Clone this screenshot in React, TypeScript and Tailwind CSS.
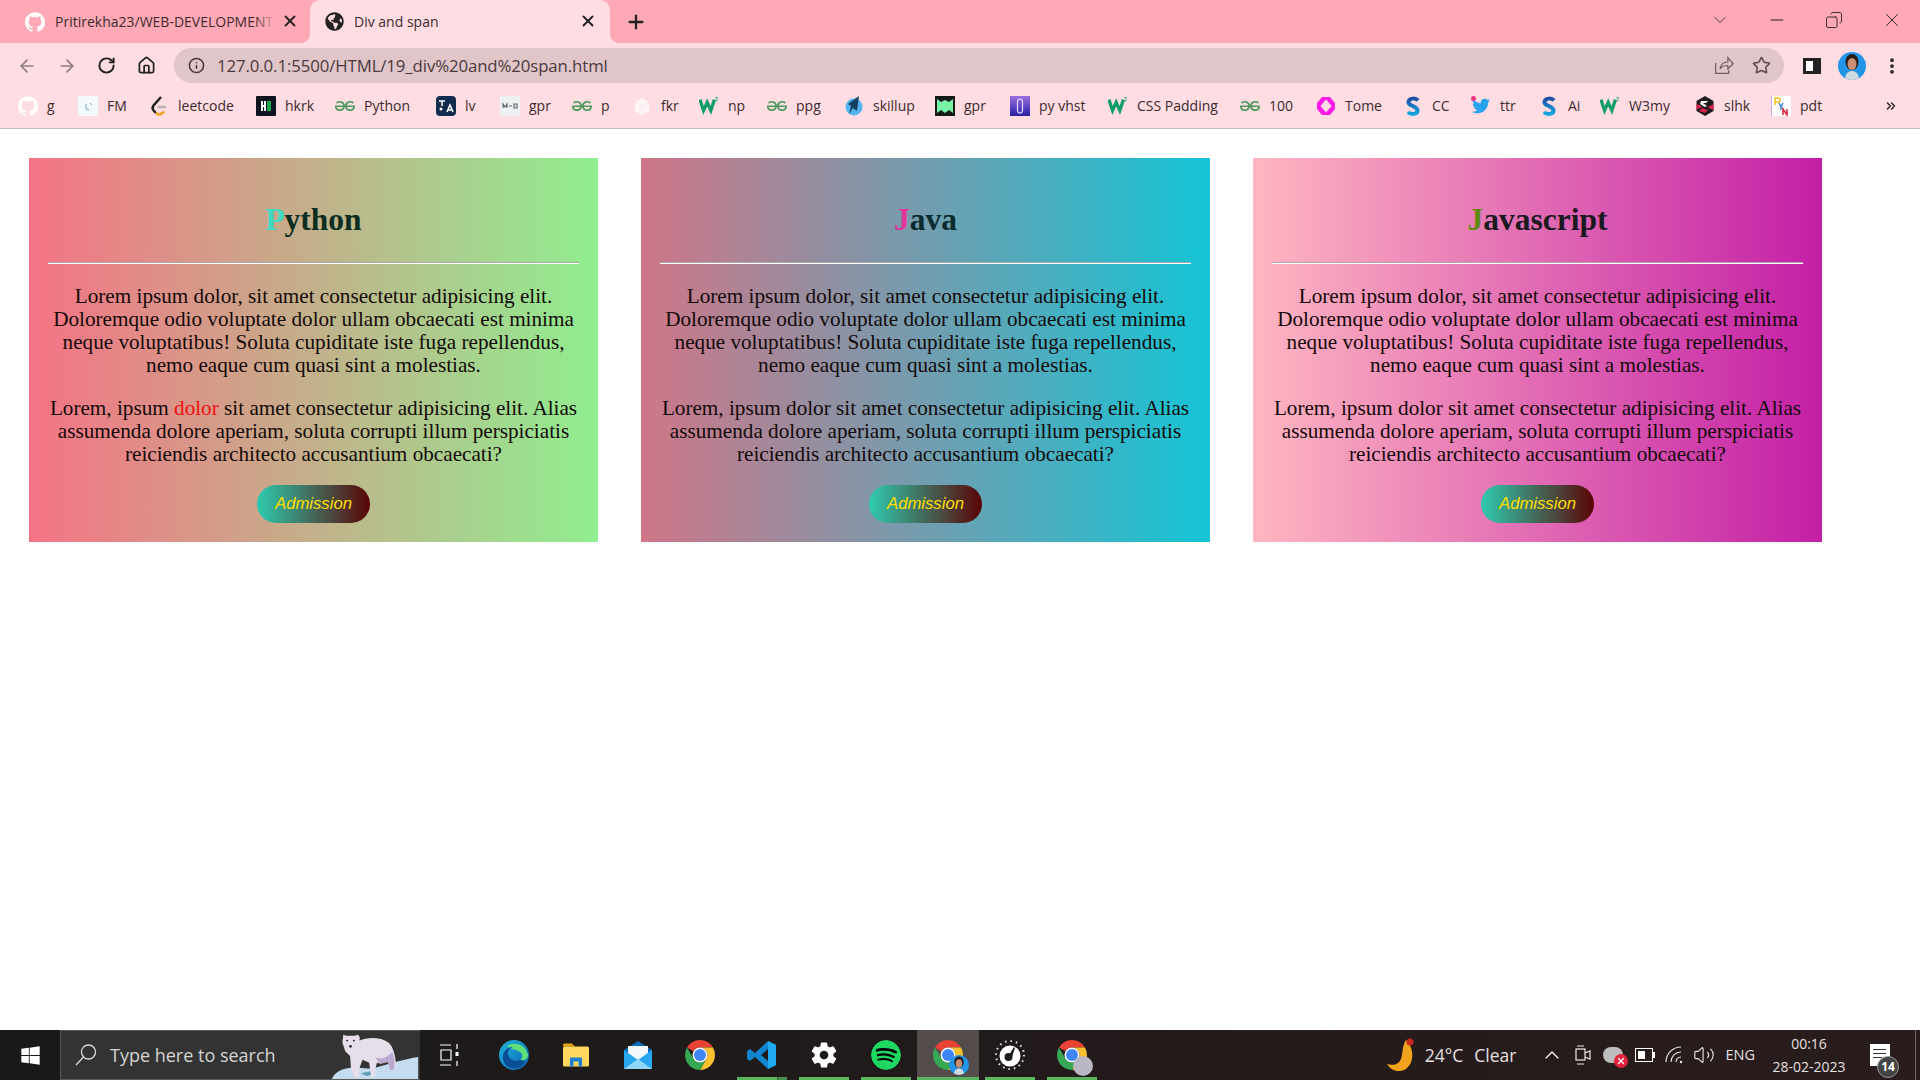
import React from 'react';
import {
  ArrowLeft,
  ArrowRight,
  ChevronDown,
  ChevronsRight,
  ChevronUp,
  Copy,
  Home,
  Info,
  Minus,
  MoreVertical,
  Plus,
  RotateCw,
  Star,
  Volume2,
  X,
} from 'lucide-react';
import { SiGeeksforgeeks, SiGithub, SiSpotify } from 'react-icons/si';
import { FaGlobeAmericas, FaTwitter, FaWindows } from 'react-icons/fa';
import { IoSettingsSharp } from 'react-icons/io5';

const Gfg = () => <SiGeeksforgeeks className="h-5 w-5 text-[#4b9a5a]" />;

const W3 = () => (
  <svg viewBox="0 0 22 20" className="h-5 w-5">
    <path d="M1 3l4 12 4-9 4 9 4-12" fill="none" stroke="#0f9d6a" strokeWidth="3.6" />
    <path d="M18 0.5h2.5l-1.4 1.6a1.2 1.2 0 1 1-1.2 1.6" fill="none" stroke="#0f9d6a" strokeWidth="0.8" />
  </svg>
);

const BlueS = () => (
  <svg viewBox="0 0 20 20" className="h-5 w-5">
    <defs>
      <linearGradient id="sblue" x1="0" y1="0" x2="0" y2="1">
        <stop offset="0" stopColor="#1d4fa8" />
        <stop offset="1" stopColor="#12a5e0" />
      </linearGradient>
    </defs>
    <path d="M15 4.5C13 2 6 1.5 5.5 6c-.4 4.5 9 3.5 9 8.5 0 4-7 4.5-9.5 1.5" fill="none" stroke="url(#sblue)" strokeWidth="4" />
  </svg>
);

const Leetcode = () => (
  <svg viewBox="0 0 20 20" className="h-5 w-5" fill="none" strokeWidth="2.4">
    <path d="M12 1L4.5 9.5c-1.5 2-1 4 .5 5.5l2 2" stroke="#1f1f1f" />
    <path d="M7 17c2 1.8 4.5 1.8 6.5 0l1.5-1.5" stroke="#f89f1b" />
    <path d="M8.5 11h8.5" stroke="#b3b3b3" />
  </svg>
);

const Hkrk = () => (
  <svg viewBox="0 0 20 20" className="h-5 w-5">
    <rect width="20" height="20" rx="1" fill="#0e141e" />
    <rect x="5" y="5" width="2" height="10" fill="#fff" />
    <rect x="8" y="5" width="2" height="10" fill="#fff" />
    <rect x="7" y="9" width="2" height="2" fill="#fff" />
    <rect x="11" y="5" width="4" height="10" fill="#1ba94c" />
  </svg>
);

const Lv = () => (
  <svg viewBox="0 0 20 20" className="h-5 w-5">
    <rect width="20" height="20" rx="4" fill="#122c4f" />
    <path d="M3 5h6M6 5v5M11 16l3-7 3 7M12 14h4" stroke="#fff" strokeWidth="1.5" fill="none" />
    <circle cx="5" cy="13" r="1.5" fill="#fff" />
  </svg>
);

const Tile = ({ tone }: { tone: 'fm' | 'gpr' | 'fkr' }) => {
  if (tone === 'fm') {
    return (
      <svg viewBox="0 0 20 20" className="h-5 w-5">
        <rect width="20" height="20" fill="#f4fafc" />
        <path d="M8 8v5l3 1M12 7l2 2" stroke="#6fa8c7" strokeWidth="1" fill="none" />
      </svg>
    );
  }
  if (tone === 'gpr') {
    return (
      <svg viewBox="0 0 20 20" className="h-5 w-5">
        <rect width="20" height="20" fill="#eef1f1" />
        <path d="M3 12V8l2 3 2-3v4M14 8h3v4h-3zM9 10h3" stroke="#5c6b6b" strokeWidth="1.2" fill="none" />
      </svg>
    );
  }
  return (
    <svg viewBox="0 0 20 20" className="h-5 w-5">
      <path d="M3 6l7-4 7 4v9l-7 4-7-4z" fill="#fff5f6" />
      <path d="M3 6l7 4 7-4M10 10v9" stroke="#f5e6e8" fill="none" />
    </svg>
  );
};

const Skillup = () => (
  <svg viewBox="0 0 20 20" className="h-5 w-5">
    <circle cx="10" cy="11" r="8.5" fill="#53b4ef" />
    <path d="M15 0L13 15 9 12 5 18l2-8-3-2z" fill="#12425f" />
  </svg>
);

const GprDark = () => (
  <svg viewBox="0 0 20 20" className="h-5 w-5">
    <rect width="20" height="20" fill="#151a18" />
    <path d="M2 3l4 3 4-2 4 2 4-3v14l-4-3-4 3-4-3-4 3z" fill="#78f2a7" />
  </svg>
);

const PyVhst = () => (
  <svg viewBox="0 0 20 20" className="h-5 w-5">
    <defs>
      <linearGradient id="pv" x1="0" y1="0" x2="0" y2="1">
        <stop offset="0" stopColor="#9a6ee0" />
        <stop offset="1" stopColor="#2a20a8" />
      </linearGradient>
    </defs>
    <rect width="20" height="20" fill="url(#pv)" />
    <rect x="7.5" y="3" width="5" height="14" rx="2.5" fill="none" stroke="#e6dcff" strokeWidth="1.2" />
  </svg>
);

const Tome = () => (
  <svg viewBox="0 0 20 20" className="h-5 w-5">
    <path d="M6 1h8l5 6v6l-5 6H6l-5-6V7z" fill="#ff1ae8" />
    <path d="M10 3.5l5.5 6.5-5.5 6.5-5.5-6.5z" fill="#ffdde3" />
  </svg>
);

const Ttr = () => (
  <span className="relative flex h-5 w-5 items-center justify-center">
    <FaTwitter className="h-[18px] w-[18px] text-[#2aa3ef]" />
    <span className="absolute left-0 top-0 h-[5px] w-[5px] rounded-full bg-[#f0308a]" />
  </span>
);

const Slhk = () => (
  <svg viewBox="0 0 20 20" className="h-5 w-5">
    <path d="M10 0l8.5 5v10L10 20l-8.5-5V5z" fill="#1d1d1d" />
    <path d="M1.5 8l6 2.5-6 3zM18.5 8l-6 3.5 6 2.5zM7 12l6 2-3 3-6-2z" fill="#e0234e" />
    <path d="M6 5h7l-2 2H8l4 3-2 1-5-3z" fill="#f5f5f5" />
  </svg>
);

const Pdt = () => (
  <svg viewBox="0 0 20 20" className="h-5 w-5">
    <rect width="20" height="20" fill="#fff" />
    <rect width="1" height="20" fill="#c9b0e0" />
    <path d="M4 9V2h3a2 2 0 0 1 0 4H4" fill="none" stroke="#f1c21b" strokeWidth="1.5" />
    <path d="M8 7l2 4 2-4M10 11v3" fill="none" stroke="#2c6fd0" strokeWidth="1.3" />
    <path d="M12 19v-6l4 6v-6" fill="none" stroke="#e0203a" strokeWidth="1.5" />
  </svg>
);

const bookmarks: { label: string; icon: React.ReactNode; width: string }[] = [
  { label: 'g', icon: <SiGithub className="h-5 w-5 text-white" />, width: 'w-[60px]' },
  { label: 'FM', icon: <Tile tone="fm" />, width: 'w-[71px]' },
  { label: 'leetcode', icon: <Leetcode />, width: 'w-[107px]' },
  { label: 'hkrk', icon: <Hkrk />, width: 'w-[79px]' },
  { label: 'Python', icon: <Gfg />, width: 'w-[101px]' },
  { label: 'lv', icon: <Lv />, width: 'w-[64px]' },
  { label: 'gpr', icon: <Tile tone="gpr" />, width: 'w-[72px]' },
  { label: 'p', icon: <Gfg />, width: 'w-[60px]' },
  { label: 'fkr', icon: <Tile tone="fkr" />, width: 'w-[67px]' },
  { label: 'np', icon: <W3 />, width: 'w-[68px]' },
  { label: 'ppg', icon: <Gfg />, width: 'w-[77px]' },
  { label: 'skillup', icon: <Skillup />, width: 'w-[91px]' },
  { label: 'gpr', icon: <GprDark />, width: 'w-[75px]' },
  { label: 'py vhst', icon: <PyVhst />, width: 'w-[98px]' },
  { label: 'CSS Padding', icon: <W3 />, width: 'w-[132px]' },
  { label: '100', icon: <Gfg />, width: 'w-[76px]' },
  { label: 'Tome', icon: <Tome />, width: 'w-[87px]' },
  { label: 'CC', icon: <BlueS />, width: 'w-[68px]' },
  { label: 'ttr', icon: <Ttr />, width: 'w-[68px]' },
  { label: 'Ai', icon: <BlueS />, width: 'w-[61px]' },
  { label: 'W3my', icon: <W3 />, width: 'w-[95px]' },
  { label: 'slhk', icon: <Slhk />, width: 'w-[76px]' },
  { label: 'pdt', icon: <Pdt />, width: 'w-[72px]' },
];

const Avatar = ({ className }: { className: string }) => (
  <svg viewBox="0 0 28 28" className={className}>
    <clipPath id="avatarClip">
      <circle cx="14" cy="14" r="14" />
    </clipPath>
    <g clipPath="url(#avatarClip)">
      <rect width="28" height="28" fill="#2196e8" />
      <path d="M7 28c0-6 3-9 7-9s7 3 7 9z" fill="#cfd8dc" />
      <ellipse cx="14" cy="10" rx="6.5" ry="8" fill="#2a1a18" />
      <ellipse cx="14" cy="12" rx="4.5" ry="6" fill="#c98f72" />
    </g>
  </svg>
);

const ChromeLogo = ({ className }: { className: string }) => (
  <svg viewBox="0 0 24 24" className={className}>
    <path d="M12 2a10 10 0 0 1 8.66 5H12a5 5 0 0 0-4.33 2.5L3.34 7A10 10 0 0 1 12 2z" fill="#ea4335" />
    <path d="M20.66 7A10 10 0 0 1 12 22l4.33-7.5A5 5 0 0 0 12 7z" fill="#fbc02d" />
    <path d="M3.34 7l4.33 7.5a5 5 0 0 0 8.66 0L12 22A10 10 0 0 1 3.34 7z" fill="#34a853" />
    <circle cx="12" cy="12" r="5" fill="#fff" />
    <circle cx="12" cy="12" r="4" fill="#3f86f4" />
  </svg>
);

const EdgeLogo = () => (
  <svg viewBox="0 0 30 30" className="h-[30px] w-[30px]">
    <defs>
      <linearGradient id="edgeA" x1="0" y1="0" x2="1" y2="1">
        <stop offset="0" stopColor="#1fb6d6" />
        <stop offset="1" stopColor="#0c62b8" />
      </linearGradient>
    </defs>
    <circle cx="15" cy="15" r="15" fill="url(#edgeA)" />
    <path d="M8 6c7-5 19-2 21 9 .5 4-4 6-8 5 3-2 3-6 0-8-5-3-10-3-13-6z" fill="#5de07a" />
    <path d="M21 20c-5 2-11 0-12-6-1-3 2-6 5-7-6 0-11 5-10 12 1 7 9 12 17 8 2-1 4-3 5-5-1-1-3-2-5-2z" fill="#0a4f96" />
  </svg>
);

const FolderLogo = () => (
  <svg viewBox="0 0 28 28" className="h-7 w-7">
    <path d="M1 4a1.5 1.5 0 0 1 1.5-1.5H10l3 3h-12z" fill="#e5a50f" />
    <rect x="1" y="5.5" width="26" height="20" rx="1.5" fill="#ffd75e" />
    <path d="M8 25.5v-8a1 1 0 0 1 1-1h10a1 1 0 0 1 1 1v8h-3.5v-5h-5v5z" fill="#1f7fd4" />
  </svg>
);

const MailLogo = () => (
  <svg viewBox="0 0 30 30" className="h-[30px] w-[30px]">
    <path d="M1 10L15 1l14 9v19H1z" fill="#0f6cbd" />
    <path d="M5 6h20v13l-10 5-10-5z" fill="#f2f8fc" />
    <path d="M1 10l14 10 14-10v19H1z" fill="#29a7ee" />
    <path d="M1 29l14-10 14 10z" fill="#8fd6f8" />
  </svg>
);

const VscodeLogo = () => (
  <svg viewBox="0 0 30 30" className="h-[30px] w-[30px]">
    <path d="M21 1l8 4v20l-8 4-13-12-5 4-3-2V11l3-2 5 4zm0 8l-7 6 7 6z" fill="#0f84cf" />
    <path d="M21 1l8 4v20l-8 4z" fill="#23a9f2" />
  </svg>
);

const SpeedLogo = () => (
  <svg viewBox="0 0 30 30" className="h-[30px] w-[30px]">
    <circle cx="15" cy="15" r="14" fill="none" stroke="#e5e5e5" strokeWidth="2" strokeDasharray="1.5 4" />
    <circle cx="15" cy="16" r="10.5" fill="#fff" />
    <circle cx="13.5" cy="17" r="4" fill="#1f1b1b" />
    <path d="M14 15l5-8 1 1-3 9z" fill="#1f1b1b" />
  </svg>
);

const BearArt = () => (
  <svg viewBox="0 0 90 50" className="h-full w-[90px]">
    <path d="M0 50c3-7 10-11 22-12 8-1 12 3 24 0 15-4 30-9 44-11v23z" fill="#c5dcf0" />
    <path d="M30 44l6 3 8-2-3-3z" fill="#5f9fb8" />
    <path d="M12 4l3 1h9l3-1 2 2 0 4c8-4 22-4 30 2 5 4 7 14 8 22l-1 6-4 1-3-9-8 2-4-1-2 8 1 6-5 1-2-15-7-3-4 11 1 7-5 1-4-10-1-13-5-5-3-9z" fill="#e6deeb" />
    <path d="M45 27c6 3 12 2 18-5 2 5 3 12 2 18l-4 1-3-9-8 2z" fill="#b9a9cf" />
    <circle cx="16" cy="10" r="1" fill="#1f1b1b" />
    <circle cx="23" cy="10" r="1" fill="#1f1b1b" />
    <circle cx="19.5" cy="16" r="1.5" fill="#3a2a2a" />
  </svg>
);

const taskSlots: { icon: React.ReactNode; under?: 'single' | 'stack' | 'active' }[] = [
  { icon: <EdgeLogo /> },
  { icon: <FolderLogo /> },
  { icon: <MailLogo /> },
  { icon: <ChromeLogo className="h-9 w-9" /> },
  { icon: <VscodeLogo />, under: 'stack' },
  { icon: <IoSettingsSharp className="h-7 w-7 text-white" />, under: 'single' },
  { icon: <SiSpotify className="h-[30px] w-[30px] rounded-full bg-black text-[#1ed760]" />, under: 'single' },
  {
    icon: (
      <span className="relative flex h-9 w-9 items-center justify-center">
        <ChromeLogo className="h-9 w-9" />
        <Avatar className="absolute bottom-[-3px] right-[-3px] h-[22px] w-[20px]" />
      </span>
    ),
    under: 'active',
  },
  { icon: <SpeedLogo />, under: 'single' },
  {
    icon: (
      <span className="relative flex h-9 w-9 items-center justify-center">
        <ChromeLogo className="h-9 w-9" />
        <span className="absolute bottom-[-3px] right-[-3px] h-5 w-5 rounded-full bg-[#b9b7c4]" />
      </span>
    ),
    under: 'single',
  },
];

const paragraphOne =
  'Lorem ipsum dolor, sit amet consectetur adipisicing elit. Doloremque odio voluptate dolor ullam obcaecati est minima neque voluptatibus! Soluta cupiditate iste fuga repellendus, nemo eaque cum quasi sint a molestias.';

const cards = [
  {
    first: 'P',
    rest: 'ython',
    gradient: 'bg-[linear-gradient(to_right,#f57385,#90ee90)]',
    firstColor: 'text-[#3fd9c4]',
    restColor: 'text-[#0b2d22]',
    highlight: true,
  },
  {
    first: 'J',
    rest: 'ava',
    gradient: 'bg-[linear-gradient(to_right,#cf7688,#14c5d6)]',
    firstColor: 'text-[#e0359a]',
    restColor: 'text-[#0b2a2e]',
    highlight: false,
  },
  {
    first: 'J',
    rest: 'avascript',
    gradient: 'bg-[linear-gradient(to_right,#ffb6c1,#c31fa6)]',
    firstColor: 'text-[#5f8a12]',
    restColor: 'text-[#1a1a20]',
    highlight: false,
  },
];

export default function App() {
  return (
    <div className="flex h-screen flex-col overflow-hidden bg-white font-['Open_Sans',sans-serif]">
      {/* tab strip */}
      <div className="flex h-[43px] shrink-0 items-end bg-[#ffa9b7]">
        <div className="relative flex h-[43px] w-[310px] items-center pl-[25px] text-[14px] text-[#3b2b2e]">
          <SiGithub className="h-5 w-5 text-white" />
          <span className="ml-[10px] w-[220px] overflow-hidden whitespace-nowrap">Pritirekha23/WEB-DEVELOPMENT</span>
          <span className="absolute left-[255px] top-0 h-full w-[20px] bg-[linear-gradient(to_right,transparent,#ffa9b7)]" />
          <X className="absolute left-[281px] top-[12px] h-[18px] w-[18px] text-[#222]" strokeWidth={2.5} />
        </div>
        <div className="relative flex h-[43px] w-[300px] items-center rounded-t-[10px] bg-[#ffdde3] pl-[15px] text-[14px] text-[#3b2b2e]">
          <span className="absolute bottom-0 left-[-10px] h-[10px] w-[10px] bg-[radial-gradient(circle_at_0_0,#ffa9b7_10px,#ffdde3_10.5px)]" />
          <span className="absolute bottom-0 right-[-10px] h-[10px] w-[10px] bg-[radial-gradient(circle_at_100%_0,#ffa9b7_10px,#ffdde3_10.5px)]" />
          <FaGlobeAmericas className="h-[19px] w-[19px] text-[#222]" />
          <span className="ml-[10px]">Div and span</span>
          <X className="absolute left-[269px] top-[12px] h-[18px] w-[18px] text-[#222]" strokeWidth={2.5} />
        </div>
        <div className="flex h-[43px] w-[52px] items-center justify-center">
          <Plus className="h-[22px] w-[22px] text-[#222]" strokeWidth={2.5} />
        </div>
        <div className="ml-auto flex h-[43px] items-center pb-[3px] text-[#222]">
          <ChevronDown className="mr-[37px] h-5 w-5" strokeWidth={1} />
          <Minus className="mr-[38px] h-5 w-5" strokeWidth={1.2} />
          <Copy className="mr-[38px] h-[18px] w-[18px] -scale-x-100" strokeWidth={1.2} />
          <X className="mr-[17px] h-[22px] w-[22px]" strokeWidth={1} />
        </div>
      </div>

      {/* toolbar */}
      <div className="flex h-[40px] shrink-0 items-center bg-[#ffdde3] pt-[5px]">
        <ArrowLeft className="ml-[17px] h-[20px] w-[20px] text-[#8d7d80]" strokeWidth={2} />
        <ArrowRight className="ml-[20px] h-[20px] w-[20px] text-[#8d7d80]" strokeWidth={2} />
        <RotateCw className="ml-[20px] h-[19px] w-[19px] text-[#222]" strokeWidth={2.4} />
        <Home className="ml-[21px] h-[19px] w-[19px] text-[#222]" strokeWidth={2.2} />
        <div className="ml-[18px] flex h-[35px] w-[1610px] items-center rounded-full bg-[#e0c5c9] pl-[14px] pr-[13px] text-[#4a3a3d]">
          <Info className="h-[17px] w-[17px]" strokeWidth={2.2} />
          <span className="ml-[12px] text-[16.8px] tracking-[-0.1px]">127.0.0.1:5500/HTML/19_div%20and%20span.html</span>
          <svg viewBox="0 0 24 24" className="ml-auto mr-[18px] h-[21px] w-[21px]" fill="none" stroke="#6e6062" strokeWidth="1.4">
            <path d="M3 9v12h15v-4M8 16c1-6 5-8 9-8V3l6 7-6 6v-4c-4 0-7 1-9 4z" />
          </svg>
          <Star className="h-[19px] w-[19px] text-[#5a4c4f]" strokeWidth={2} />
        </div>
        <span className="ml-[19px] flex h-[16px] w-[18px] justify-start border-[3px] border-l-[3px] border-r-[8px] border-[#222] bg-white" />
        <Avatar className="ml-[17px] h-[30px] w-[28px]" />
        <MoreVertical className="ml-[16px] h-[20px] w-[20px] text-[#222]" strokeWidth={2.5} />
      </div>

      {/* bookmarks bar */}
      <div className="flex h-[46px] shrink-0 items-center border-b border-[#c9bcc0] bg-[#ffdde3] pl-[18px] text-[14px] text-[#3a2a2d]">
        {bookmarks.map((b, i) => (
          <div key={i} className={`${b.width} flex shrink-0 items-center gap-[9px]`}>
            <span className="flex h-5 w-5 shrink-0 items-center justify-center">{b.icon}</span>
            <span className="whitespace-nowrap">{b.label}</span>
          </div>
        ))}
        <ChevronsRight className="ml-[41px] h-[14px] w-[14px] text-[#222]" strokeWidth={2.5} />
      </div>

      {/* page */}
      <main className="flex flex-1 items-start gap-[43px] pl-[29px] pt-[29px] font-['Liberation_Serif',serif]">
        {cards.map((card) => (
          <section key={card.rest} className={`${card.gradient} flex h-[384px] w-[569px] flex-col items-center px-[19px] pt-[45px] text-center`}>
            <h2 className="h-[34px] text-[31.5px] font-bold leading-[34px]">
              <span className={card.firstColor}>{card.first}</span>
              <span className={card.restColor}>{card.rest}</span>
            </h2>
            <hr className="mt-[25px] w-full border-t border-b border-x-0 border-t-[#a8a8a8] border-b-white" />
            <p className="mt-[21px] text-[21.2px] leading-[23px] text-[#140a0a]">{paragraphOne}</p>
            <p className="mt-[20px] text-[21.2px] leading-[23px] text-[#140a0a]">
              Lorem, ipsum {card.highlight ? <span className="text-[#f01010]">dolor</span> : 'dolor'} sit amet consectetur adipisicing elit. Alias assumenda dolore aperiam, soluta corrupti illum perspiciatis reiciendis architecto accusantium obcaecati?
            </p>
            <button className="mt-[19px] flex h-[38px] w-[113px] items-center justify-center rounded-[20px] bg-[linear-gradient(to_right,#2ecbae,#5a0404)] pb-[1px] font-['Liberation_Sans',sans-serif] text-[16.7px] italic text-[#ffdf00]">
              Admission
            </button>
          </section>
        ))}
      </main>

      {/* taskbar */}
      <div className="flex h-[50px] shrink-0 items-center bg-[linear-gradient(to_right,#191919,#2a1c1c)] text-[#e6e0e0]">
        <div className="flex h-full w-[60px] items-center justify-center">
          <FaWindows className="h-[21px] w-[21px] text-white" />
        </div>
        <div className="relative flex h-full w-[360px] items-center overflow-hidden border-y border-l border-[#585858] bg-[#333] pl-[13px]">
          <svg viewBox="0 0 24 24" className="h-[24px] w-[24px]" fill="none" stroke="#d8d8d8" strokeWidth="1.3">
            <circle cx="14.5" cy="9" r="7" />
            <path d="M9.5 14L2 22" />
          </svg>
          <span className="ml-[12px] text-[18px] text-[#d4d4d4]">Type here to search</span>
          <span className="absolute bottom-0 right-0 top-0">
            <BearArt />
          </span>
        </div>
        <div className="flex h-full w-[63px] items-center justify-center pr-[5px]">
          <svg viewBox="0 0 20 24" className="h-[24px] w-[20px]" fill="none" stroke="#fff" strokeWidth="1.2">
            <path d="M1 2h11M1 22h11M2 7h10v10H2zM18 1v5M18 18v5" />
            <rect x="16.5" y="9" width="3" height="4" fill="#fff" stroke="none" />
          </svg>
        </div>
        {taskSlots.map((slot, i) => (
          <div
            key={i}
            className={`${slot.under === 'active' ? 'bg-[#544c4b]' : ''} relative flex h-full w-[62px] items-center justify-center`}
          >
            {slot.icon}
            {slot.under === 'active' && <span className="absolute bottom-0 left-0 right-0 h-[3px] bg-[#5cb660]" />}
            {slot.under === 'single' && <span className="absolute bottom-0 left-[6px] right-[6px] h-[3px] bg-[#5cb660]" />}
            {slot.under === 'stack' && (
              <span className="absolute bottom-0 left-[6px] right-[6px] flex h-[3px]">
                <span className="flex-1 bg-[#5cb660]" />
                <span className="w-[10px] border-l border-[#2f6b33] bg-[#4a8f4e]" />
              </span>
            )}
          </div>
        ))}

        <div className="ml-auto flex h-full items-center pr-[4px]">
          <svg viewBox="0 0 30 36" className="h-[36px] w-[30px]">
            <path d="M20 3c8 8 9 22 0 29-7 4-15 2-19-5 7 2 12 0 14-5 2-6 1-13 5-19z" fill="#f2a31c" />
            <circle cx="24" cy="5" r="3.5" fill="#c9281e" />
          </svg>
          <span className="ml-[9px] text-[17.5px]">24°C</span>
          <span className="ml-[11px] text-[17.5px]">Clear</span>
          <ChevronUp className="ml-[24px] h-6 w-6 text-white" strokeWidth={1.2} />
          <svg viewBox="0 0 18 24" className="ml-[10px] h-[24px] w-[18px]" fill="none" stroke="#ececec" strokeWidth="1.2">
            <rect x="2" y="6" width="9" height="11" />
            <path d="M11 10l5-2v8l-5-2M3 3h7M3 21h7" />
          </svg>
          <span className="relative ml-[11px] h-[16px] w-[20px] rounded-full bg-[#bdbdbd]">
            <span className="absolute bottom-[-5px] right-[-5px] flex h-[14px] w-[14px] items-center justify-center rounded-full bg-[#e0243a]">
              <X className="h-[10px] w-[10px] text-white" strokeWidth={3} />
            </span>
          </span>
          <span className="relative ml-[12px] flex h-[14px] w-[18px] items-center border border-white pl-[2px]">
            <span className="h-[8px] w-[7px] bg-white" />
            <span className="absolute right-[-3px] top-[3px] h-[6px] w-[2px] bg-white" />
          </span>
          <svg viewBox="0 0 20 20" className="ml-[12px] h-[20px] w-[20px]" fill="none" stroke="#ececec" strokeWidth="1.1">
            <path d="M11 17a5 5 0 0 1 5-5M6 17a10 10 0 0 1 10-10M1 17a15 15 0 0 1 15-15" />
            <circle cx="16" cy="17" r="1.2" fill="#ececec" stroke="none" />
          </svg>
          <Volume2 className="ml-[8px] h-[22px] w-[22px] text-[#ececec]" strokeWidth={1.2} />
          <span className="ml-[10px] text-[14.5px]">ENG</span>
          <div className="ml-[16px] flex w-[76px] flex-col items-center text-[14px] leading-[23px]">
            <span>00:16</span>
            <span className="whitespace-nowrap">28-02-2023</span>
          </div>
          <div className="relative ml-[23px] h-[22px] w-[20px] bg-white">
            <span className="absolute left-[3px] top-[5px] h-[1px] w-[13px] bg-[#333]" />
            <span className="absolute left-[3px] top-[9px] h-[1px] w-[13px] bg-[#333]" />
            <span className="absolute left-[3px] top-[13px] h-[1px] w-[9px] bg-[#333]" />
            <span className="absolute bottom-[-12px] right-[-9px] flex h-[22px] w-[22px] items-center justify-center rounded-full border border-[#999] bg-[#444] text-[12px] font-bold text-white">14</span>
          </div>
          <span className="ml-[25px] h-full w-px bg-[#6a6a6a]" />
        </div>
      </div>
    </div>
  );
}
